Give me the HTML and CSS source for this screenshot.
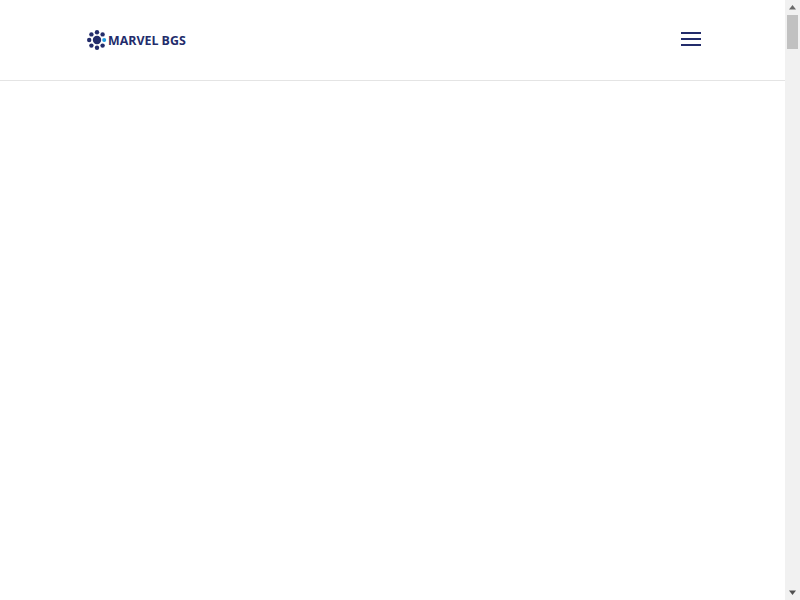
FILE: index.html
```html
<!DOCTYPE html>
<html lang="en">
<head>
<meta charset="utf-8">
<title>Marvel BGS</title>
<link rel="stylesheet" href="styles.css">
</head>
<body>
<div class="page">
  <main class="content">
    <header class="header">
      <a class="logo" href="#">
        <svg class="logo-mark" width="20" height="20" viewBox="0 0 20 20" aria-hidden="true">
          <circle cx="10" cy="10" r="4.2" fill="#232c6b"/>
          <circle cx="17.2" cy="10" r="2" fill="#1e9be0"/>
          <circle cx="10" cy="2.2" r="2.2" fill="#232c6b"/>
          <circle cx="4.4" cy="4.4" r="2.2" fill="#232c6b"/>
          <circle cx="15.6" cy="4.4" r="2.2" fill="#232c6b"/>
          <circle cx="2.2" cy="10" r="2.2" fill="#232c6b"/>
          <circle cx="4.4" cy="15.6" r="2.2" fill="#232c6b"/>
          <circle cx="15.6" cy="15.6" r="2.2" fill="#232c6b"/>
          <circle cx="10" cy="17.8" r="2.2" fill="#232c6b"/>
        </svg>
        <span class="logo-text">MARVEL BGS</span>
      </a>
      <button class="menu-toggle" type="button" aria-label="Menu">
        <span class="bar"></span><span class="bar"></span><span class="bar"></span>
      </button>
    </header>
  </main>
  <aside class="scrollbar" aria-hidden="true">
    <svg class="arrow" width="15" height="15" viewBox="0 0 15 15"><path d="M7.5 5 11 9.5H4z" fill="#6a6a6a"/></svg>
    <div class="track"><div class="thumb"></div></div>
    <svg class="arrow" width="15" height="15" viewBox="0 0 15 15"><path d="M7.5 10 4 5.5h7z" fill="#505050"/></svg>
  </aside>
</div>
</body>
</html>
```
FILE: styles.css
```css
html, body {
  margin: 0;
  height: 100%;
  overflow: hidden;
  background: #fff;
}
.page {
  display: flex;
  height: 600px;
}
.content {
  flex: 1;
  min-width: 0;
}
.header {
  height: 80px;
  box-sizing: content-box;
  border-bottom: 1px solid #e4e4e4;
  display: flex;
  align-items: center;
  justify-content: space-between;
  padding: 0 84px 0 87px;
}
.logo {
  display: flex;
  align-items: center;
  gap: 1px;
  text-decoration: none;
}
.logo-mark {
  display: block;
}
.logo-text {
  font-family: "Open Sans", sans-serif;
  font-weight: 700;
  font-size: 12.4px;
  line-height: 20px;
  padding-top: 1px;
  color: #232c6b;
  white-space: nowrap;
}
.menu-toggle {
  display: flex;
  flex-direction: column;
  gap: 4px;
  width: 20px;
  padding: 0;
  margin-bottom: 2px;
  border: 0;
  background: none;
}
.bar {
  display: block;
  height: 2px;
  background: #232c6b;
}
.scrollbar {
  width: 15px;
  flex: none;
  background: #f1f1f1;
  display: flex;
  flex-direction: column;
}
.arrow {
  display: block;
  flex: none;
}
.track {
  flex: 1;
  padding: 0 2px;
}
.thumb {
  height: 34px;
  background: #c1c1c1;
}
```
